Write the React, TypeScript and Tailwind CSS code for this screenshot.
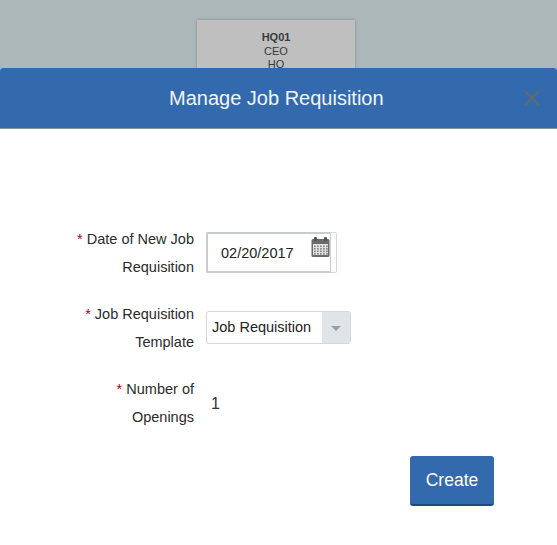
import { X } from 'lucide-react';

const font = { fontFamily: '"Liberation Sans", Arial, sans-serif' };

function CalendarIcon() {
  return (
    <svg width="19" height="20" viewBox="0 0 19 20" className="block">
      <rect x="0.5" y="2" width="18" height="18" rx="1.5" fill="#6a6a6a" />
      <rect x="3" y="0" width="3" height="4" rx="1" fill="#555" />
      <rect x="13" y="0" width="3" height="4" rx="1" fill="#555" />
      <rect x="2" y="7" width="15" height="11" fill="#e4e4e4" />
      {[8.5, 11, 13.5, 16].map((y) =>
        [3, 6, 9, 12, 15].map((x) => <rect key={`${x}-${y}`} x={x} y={y} width="1.8" height="1.6" fill="#8a8a8a" />)
      )}
    </svg>
  );
}

function Label({ first, second }: { first: string; second: string }) {
  return (
    <div className="w-[194px] shrink-0 text-right text-[14.5px] leading-[28px] text-[#2b2b2b]">
      <div>
        <span className="text-[#b00020]">*</span> {first}
      </div>
      <div>{second}</div>
    </div>
  );
}

export default function App() {
  return (
    <div className="flex h-[545px] w-[557px] flex-col overflow-hidden bg-[#abb7b9]" style={font}>
      <div className="flex h-[68px] shrink-0 justify-center pr-[5px] pt-5">
        <div className="h-[60px] w-[158px] bg-[#bfbfbf] pt-[11px] text-center text-[11px] leading-[13.5px] text-[#3a3a3a] shadow-[0_0_3px_rgba(0,0,0,0.25)]">
          <div className="font-bold">HQ01</div>
          <div>CEO</div>
          <div>HQ</div>
        </div>
      </div>
      <div className="z-10 flex min-h-0 flex-1 flex-col rounded-t-[3px] bg-white">
        <div className="flex h-[61px] shrink-0 items-center justify-between rounded-t-[3px] border-b border-[#8a9299] bg-[#336aae] pl-[169px] pr-[12px]">
          <span className="text-[20px] text-[#f2f5fa]">Manage Job Requisition</span>
          <X size={26} strokeWidth={2} className="text-[#5f6a75]" />
        </div>
        <div className="flex flex-col pt-[96px]">
          <div className="flex items-start gap-3">
            <Label first="Date of New Job" second="Requisition" />
            <div className="mt-[7px] h-[41px] w-[131px] rounded-[2px] border-y border-r border-[#d4d8d8]">
              <div className="-my-px flex h-[41px] w-[125px] items-start justify-between rounded-[2px] border-y-2 border-l-2 border-r border-[#c8cccc] pt-[3px]">
                <span className="pl-[13px] pt-[5px] text-[14.5px] leading-[22px] text-[#222222]">02/20/2017</span>
                <CalendarIcon />
              </div>
            </div>
          </div>
          <div className="mt-[19px] flex items-start gap-3">
            <Label first="Job Requisition" second="Template" />
            <div className="mt-[11px] flex h-[33px] w-[145px] items-stretch justify-between overflow-hidden rounded-[3px] border border-[#d4d8d8]">
              <span className="pl-[5px] text-[14.5px] leading-[31px] text-[#222222]">Job Requisition</span>
              <span className="flex w-[28px] items-center justify-center bg-[#e1e4e6]">
                <span className="mt-[2px] h-0 w-0 border-x-[5px] border-t-[5px] border-x-transparent border-t-[#9aa2a8]" />
              </span>
            </div>
          </div>
          <div className="mt-[19px] flex items-start gap-3">
            <Label first="Number of" second="Openings" />
            <span className="pl-[5px] pt-[19px] text-[16px] leading-[20px] text-[#333333]">1</span>
          </div>
        </div>
        <div className="flex justify-end pr-[63px] pt-[25px]">
          <button className="h-[50px] w-[84px] rounded-[3px] border-b-2 border-[#1f4a80] bg-[#336aae] text-[17.5px] text-white">Create</button>
        </div>
      </div>
    </div>
  );
}
